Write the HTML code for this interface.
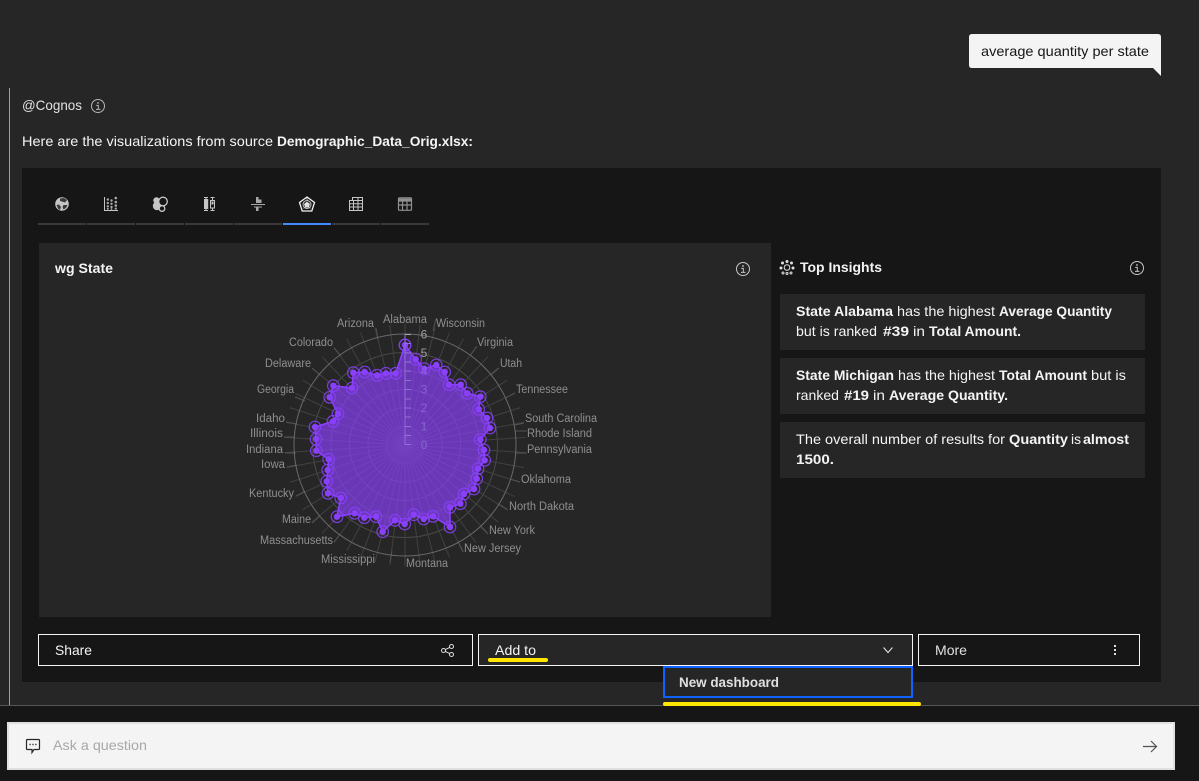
<!DOCTYPE html>
<html lang="en">
<head>
<meta charset="utf-8">
<title>Cognos Assistant</title>
<style>
html,body{margin:0;padding:0;width:1199px;height:781px;overflow:hidden;background:#262626}
body{position:relative;font-family:"Liberation Sans",sans-serif}
.b{position:absolute;box-sizing:border-box}
svg{position:absolute;left:0;top:0}
text{font-family:"Liberation Sans",sans-serif}
.t{font-size:14px;fill:#f4f4f4}
.s{font-weight:700}
.l{font-size:11.5px;fill:#8f8f8f}
.a{font-size:12px;text-anchor:middle}
</style>
</head>
<body>
<div class="b" style="left:9px;top:88px;width:1px;height:617px;background:#a58fd8"></div>
<div class="b" style="left:22px;top:168px;width:1139px;height:514px;background:#161616"></div>
<div class="b" style="left:39px;top:243px;width:732px;height:374px;background:#262626"></div>
<div class="b" style="left:780px;top:294px;width:365px;height:56px;background:#262626"></div>
<div class="b" style="left:780px;top:358px;width:365px;height:56px;background:#262626"></div>
<div class="b" style="left:780px;top:422px;width:365px;height:56px;background:#262626"></div>
<div class="b" style="left:38px;top:634px;width:435px;height:32px;border:1px solid #f4f4f4;background:#161616"></div>
<div class="b" style="left:478px;top:634px;width:435px;height:32px;border:1px solid #f4f4f4;background:#262626"></div>
<div class="b" style="left:918px;top:634px;width:222px;height:32px;border:1px solid #f4f4f4;background:#161616"></div>
<div class="b" style="left:663px;top:666px;width:250px;height:32px;border:2px solid #0f62fe;background:#262626"></div>
<div class="b" style="left:0;top:705px;width:1199px;height:76px;background:#161616;border-top:1px solid #565656"></div>
<div class="b" style="left:7px;top:722px;width:1168px;height:48px;background:#f4f4f4;border:2px solid #e0e0e0"></div>
<div class="b" style="left:488px;top:658px;width:60px;height:4px;background:#ffe600;border-radius:2px"></div>
<div class="b" style="left:663px;top:702px;width:258px;height:4px;background:#ffe600;border-radius:2px"></div>

<svg width="1199" height="781" viewBox="0 0 1199 781" xmlns="http://www.w3.org/2000/svg">
<defs>
<marker id="m" markerUnits="userSpaceOnUse" markerWidth="16" markerHeight="16" refX="8" refY="8" overflow="visible">
<circle cx="8" cy="8" r="3.2" fill="#8a3ffc"/><circle cx="8" cy="8" r="5.8" fill="none" stroke="#8a3ffc" stroke-opacity=".85" stroke-width="1.2"/>
</marker>
<g id="info" fill="none" stroke="currentColor"><circle cx="0" cy="0" r="6.5"/><path d="M-1.8 -0.6H0.3V3.4M-2 3.4H2.4" stroke-width="1"/><circle cx="0" cy="-3" r=".9" fill="currentColor" stroke="none"/></g>
</defs>

<!-- bubble -->
<path d="M972 34H1158Q1161 34 1161 37V76L1153 68H972Q969 68 969 65V37Q969 34 972 34Z" fill="#f4f4f4"/>
<text x="981" y="56" font-size="14" fill="#161616" textLength="168" lengthAdjust="spacingAndGlyphs">average quantity per state</text>

<text class="t" x="22" y="110" style="fill:#e0e0e0" textLength="60" lengthAdjust="spacingAndGlyphs">@Cognos</text>
<use href="#info" x="98" y="106" style="color:#b5b5b5"/>
<text class="t" x="22" y="146" textLength="251" lengthAdjust="spacingAndGlyphs">Here are the visualizations from source</text>
<text class="t s" x="277" y="146" textLength="196" lengthAdjust="spacingAndGlyphs">Demographic_Data_Orig.xlsx:</text>

<!-- tabs -->
<g fill="#393939">
<rect x="38" y="223" width="48" height="2"/><rect x="87" y="223" width="48" height="2"/><rect x="136" y="223" width="48" height="2"/><rect x="185" y="223" width="48" height="2"/><rect x="234" y="223" width="48" height="2"/><rect x="332" y="223" width="48" height="2"/><rect x="381" y="223" width="48" height="2"/>
</g>
<rect x="283" y="223" width="48" height="2" fill="#4589ff"/>

<!-- globe -->
<g>
<circle cx="62" cy="204" r="6.8" fill="#c6c6c6"/>
<path d="M60 198.500L64 198L67 200L65 202.500L62 201.500L60 201ZM56.500 205L59 204.500L61 207L60 210L58 208.500ZM63.500 205L67.500 205L66 208L63.500 209.500L62.500 207Z" fill="#3a3a3a"/>
</g>
<!-- scatter -->
<g fill="#a8a8a8">
<path d="M104.500 197V210.500H118" fill="none" stroke="#c6c6c6"/>
<circle cx="107.800" cy="199.500" r="1.200"/><circle cx="111.500" cy="200.500" r="1.200"/><circle cx="115.800" cy="198" r="1.300"/>
<circle cx="107.800" cy="203" r="1.200"/><circle cx="111.500" cy="203.800" r="1.200"/><circle cx="115.800" cy="202" r="1.300"/>
<circle cx="107.800" cy="206.300" r="1.200"/><circle cx="111.500" cy="207" r="1.200"/><circle cx="115.800" cy="205.500" r="1.300"/>
<circle cx="107.800" cy="208.800" r="1"/><circle cx="111.500" cy="209" r=".9"/><circle cx="115.800" cy="208.600" r="1.100"/>
</g>
<!-- bubbles -->
<g>
<circle cx="156.500" cy="200.500" r="3.200" fill="#c6c6c6"/>
<circle cx="157" cy="206" r="4.200" fill="#c6c6c6"/>
<circle cx="163" cy="201.500" r="4.300" fill="#161616" stroke="#c6c6c6" stroke-width="1.300"/>
<circle cx="162" cy="208.500" r="2.800" fill="#161616" stroke="#c6c6c6" stroke-width="1.300"/>
</g>
<!-- boxplot -->
<g stroke="#c6c6c6" fill="none">
<path d="M204 197.500H208M206 197.500V210.500M204 210.500H208M210.500 197.500H214.500M212.500 197.500V210.500M210.500 210.500H214.500"/>
<rect x="204.500" y="199.500" width="3.200" height="9" fill="#c6c6c6"/>
<rect x="210.500" y="200.500" width="4" height="7.500" fill="#161616"/>
<rect x="211.500" y="201.500" width="2" height="3" fill="#c6c6c6" stroke="none"/>
</g>
<!-- tornado -->
<g fill="#a8a8a8">
<rect x="256" y="197" width="2.500" height="6"/><rect x="258.500" y="199.500" width="3" height="3.500"/>
<rect x="251" y="204" width="14" height="1"/>
<rect x="254" y="206.500" width="8" height="1"/>
<rect x="256" y="206.500" width="2.500" height="4.500"/>
</g>
<!-- radar tab -->
<g fill="none" stroke="#f4f4f4">
<path d="M307 197L314.500 202.500L311.800 211H302.200L299.500 202.500Z" stroke-width="1.300"/>
<circle cx="307" cy="204.500" r="4" stroke="#c6c6c6" stroke-width="1"/>
<path d="M307 201.500L310 204L308.800 207.500H305.200L304 204Z" fill="#e0e0e0" stroke="none"/>
<path d="M303.500 208.500L305 207M310.500 208.500L309 207M307 198V201" stroke="#c6c6c6" stroke-width=".8"/>
</g>
<!-- table -->
<g fill="none" stroke="#c6c6c6">
<path d="M352.500 197.500H362.500V210.500H349.500V200.500H352.500ZM352.500 200.500H362.500M349.500 203.800H362.500M349.500 207H362.500M353.500 200.500V210.500M358 197.500V210.500"/>
</g>
<!-- crosstab -->
<g fill="none" stroke="#8f8f8f" stroke-width="1.200">
<rect x="398.500" y="197.800" width="13" height="12.500" rx="1"/>
<path d="M398.500 201H411.500M398.500 205H411.500M402.500 201V210M407 201V210"/>
<path d="M398.500 199.500H411.500" stroke-width="2"/>
</g>

<!-- chart header -->
<text class="t s" x="55" y="273" textLength="58" lengthAdjust="spacingAndGlyphs">wg State</text>
<use href="#info" x="743" y="269" style="color:#c6c6c6"/>

<!-- radar grid -->
<g fill="none" stroke="#414141" stroke-width="1">
<circle cx="405" cy="445" r="18.5" stroke="#4a4a4a"/><circle cx="405" cy="445" r="37" stroke="#4a4a4a"/><circle cx="405" cy="445" r="55.500" stroke="#4a4a4a"/><circle cx="405" cy="445" r="74" stroke="#4a4a4a"/><circle cx="405" cy="445" r="92.500" stroke="#4a4a4a"/>
<path id="sp" d="M405 445V324"/>
<use href="#sp" transform="rotate(7.2 405 445)"/><use href="#sp" transform="rotate(14.4 405 445)"/><use href="#sp" transform="rotate(21.6 405 445)"/><use href="#sp" transform="rotate(28.8 405 445)"/><use href="#sp" transform="rotate(36 405 445)"/><use href="#sp" transform="rotate(43.2 405 445)"/><use href="#sp" transform="rotate(50.4 405 445)"/><use href="#sp" transform="rotate(57.6 405 445)"/><use href="#sp" transform="rotate(64.8 405 445)"/><use href="#sp" transform="rotate(72 405 445)"/><use href="#sp" transform="rotate(79.2 405 445)"/><use href="#sp" transform="rotate(86.4 405 445)"/><use href="#sp" transform="rotate(93.6 405 445)"/><use href="#sp" transform="rotate(100.8 405 445)"/><use href="#sp" transform="rotate(108 405 445)"/><use href="#sp" transform="rotate(115.2 405 445)"/><use href="#sp" transform="rotate(122.4 405 445)"/><use href="#sp" transform="rotate(129.6 405 445)"/><use href="#sp" transform="rotate(136.8 405 445)"/><use href="#sp" transform="rotate(144 405 445)"/><use href="#sp" transform="rotate(151.2 405 445)"/><use href="#sp" transform="rotate(158.4 405 445)"/><use href="#sp" transform="rotate(165.6 405 445)"/><use href="#sp" transform="rotate(172.8 405 445)"/><use href="#sp" transform="rotate(180 405 445)"/><use href="#sp" transform="rotate(187.2 405 445)"/><use href="#sp" transform="rotate(194.4 405 445)"/><use href="#sp" transform="rotate(201.6 405 445)"/><use href="#sp" transform="rotate(208.8 405 445)"/><use href="#sp" transform="rotate(216 405 445)"/><use href="#sp" transform="rotate(223.2 405 445)"/><use href="#sp" transform="rotate(230.4 405 445)"/><use href="#sp" transform="rotate(237.6 405 445)"/><use href="#sp" transform="rotate(244.8 405 445)"/><use href="#sp" transform="rotate(252 405 445)"/><use href="#sp" transform="rotate(259.2 405 445)"/><use href="#sp" transform="rotate(266.4 405 445)"/><use href="#sp" transform="rotate(273.6 405 445)"/><use href="#sp" transform="rotate(280.8 405 445)"/><use href="#sp" transform="rotate(288 405 445)"/><use href="#sp" transform="rotate(295.2 405 445)"/><use href="#sp" transform="rotate(302.4 405 445)"/><use href="#sp" transform="rotate(309.6 405 445)"/><use href="#sp" transform="rotate(316.8 405 445)"/><use href="#sp" transform="rotate(324 405 445)"/><use href="#sp" transform="rotate(331.2 405 445)"/><use href="#sp" transform="rotate(338.4 405 445)"/><use href="#sp" transform="rotate(345.6 405 445)"/><use href="#sp" transform="rotate(352.8 405 445)"/>
<path stroke="#525252" d="M436 319L433 331M477 346L470 356M499 368L491 375M515 393L505 398M524 423L515 425M527 431H515M527 453H515M520 482L510 479M508 510L499 504M488 534L481 527M463 552L458 542M390 563L392 551M334 542L340 534M312 523L320 516M296 496L305 491M287 467L297 465M285 453H296M284 437H295M286 422L297 424M295 397L305 401M312 368L320 375M334 348L341 356M376 328L378 339"/>
</g>
<circle cx="405" cy="445" r="111" fill="none" stroke="#6a6a6a" stroke-width="1"/>

<!-- radar data -->
<polygon points="405,345 415.7,359.3 424.3,368.7 436.3,365 444.7,372 449,384.7 460.7,384.7 467.3,393.3 480.3,396.7 478.7,409.3 487,418 490,428 480.3,439.5 484,450 484.7,460.3 478,468.7 476.7,478.7 474,489 464,494 460.3,503.7 450,507.3 450,527 433,516.3 423.7,519 413.7,514.7 404.7,524 395,520.3 382.7,531.7 376,516.7 364.3,517.7 354.7,513.3 337,516.7 340.7,498 328,493.3 326.7,481.3 327.7,470 328.7,459.3 316.3,450.7 316,439 315,427 333,421.3 338,413.7 329.7,397.3 333.3,385.7 352,388 353.3,372.7 364.7,372 377,375.3 386,373.3 395.7,373.3" fill="#8a3ffc" fill-opacity=".68" stroke="#8a3ffc" stroke-width="1.600" stroke-linejoin="round" marker-start="url(#m)" marker-mid="url(#m)" marker-end="url(#m)"/>

<!-- axis -->
<path d="M405 334V445" stroke="#8f72d6" stroke-width="1" fill="none"/>
<path d="M405 334.500H411" stroke="#a8a8a8" fill="none"/>
<path d="M405 343.500H411M405 353H411M405 362H411M405 371H411M405 380.500H411M405 389.500H411M405 399H411M405 408H411M405 417H411M405 426.500H411M405 435.500H411M405 444.500H411" stroke="#8f72d6" fill="none"/>
<text class="a" x="424" y="338.500" fill="#a0a0a0">6</text>
<text class="a" x="424" y="357" fill="#a0a0a0">5</text>
<text class="a" x="424" y="375" fill="#8865d0">4</text>
<text class="a" x="424" y="393.500" fill="#8865d0">3</text>
<text class="a" x="424" y="412" fill="#8865d0">2</text>
<text class="a" x="424" y="430.500" fill="#8865d0">1</text>
<text class="a" x="424" y="449" fill="#8865d0">0</text>

<!-- radar labels -->
<text class="l" x="383" y="323" textLength="44" lengthAdjust="spacingAndGlyphs">Alabama</text>
<text class="l" x="436" y="327" textLength="49" lengthAdjust="spacingAndGlyphs">Wisconsin</text>
<text class="l" x="337" y="327" textLength="37" lengthAdjust="spacingAndGlyphs">Arizona</text>
<text class="l" x="477" y="346" textLength="36" lengthAdjust="spacingAndGlyphs">Virginia</text>
<text class="l" x="289" y="346" textLength="44" lengthAdjust="spacingAndGlyphs">Colorado</text>
<text class="l" x="500" y="367" textLength="22" lengthAdjust="spacingAndGlyphs">Utah</text>
<text class="l" x="265" y="367" textLength="46" lengthAdjust="spacingAndGlyphs">Delaware</text>
<text class="l" x="516" y="393" textLength="52" lengthAdjust="spacingAndGlyphs">Tennessee</text>
<text class="l" x="257" y="393" textLength="37" lengthAdjust="spacingAndGlyphs">Georgia</text>
<text class="l" x="525" y="422" textLength="72" lengthAdjust="spacingAndGlyphs">South Carolina</text>
<text class="l" x="256" y="422" textLength="29" lengthAdjust="spacingAndGlyphs">Idaho</text>
<text class="l" x="527" y="437" textLength="65" lengthAdjust="spacingAndGlyphs">Rhode Island</text>
<text class="l" x="250" y="437" textLength="33" lengthAdjust="spacingAndGlyphs">Illinois</text>
<text class="l" x="527" y="453" textLength="65" lengthAdjust="spacingAndGlyphs">Pennsylvania</text>
<text class="l" x="246" y="453" textLength="37" lengthAdjust="spacingAndGlyphs">Indiana</text>
<text class="l" x="261" y="468" textLength="24" lengthAdjust="spacingAndGlyphs">Iowa</text>
<text class="l" x="521" y="483" textLength="50" lengthAdjust="spacingAndGlyphs">Oklahoma</text>
<text class="l" x="249" y="497" textLength="45" lengthAdjust="spacingAndGlyphs">Kentucky</text>
<text class="l" x="509" y="510" textLength="65" lengthAdjust="spacingAndGlyphs">North Dakota</text>
<text class="l" x="282" y="523" textLength="29" lengthAdjust="spacingAndGlyphs">Maine</text>
<text class="l" x="489" y="534" textLength="46" lengthAdjust="spacingAndGlyphs">New York</text>
<text class="l" x="260" y="544" textLength="73" lengthAdjust="spacingAndGlyphs">Massachusetts</text>
<text class="l" x="464" y="552" textLength="57" lengthAdjust="spacingAndGlyphs">New Jersey</text>
<text class="l" x="321" y="563" textLength="54" lengthAdjust="spacingAndGlyphs">Mississippi</text>
<text class="l" x="406" y="567" textLength="42" lengthAdjust="spacingAndGlyphs">Montana</text>

<!-- insights -->
<g fill="none" stroke="#e0e0e0" stroke-width="1">
<circle cx="787" cy="267.500" r="2.800"/>
<circle cx="787" cy="261.500" r="1" fill="#e0e0e0"/><circle cx="782.500" cy="263" r="1" fill="#e0e0e0"/><circle cx="791.500" cy="263" r="1" fill="#e0e0e0"/><circle cx="781" cy="268" r="1" fill="#e0e0e0"/><circle cx="793" cy="268" r="1" fill="#e0e0e0"/><circle cx="783" cy="273" r="1"/><circle cx="787" cy="273.500" r="1"/><circle cx="791" cy="273" r="1"/>
</g>
<text class="t s" x="800" y="272" textLength="82" lengthAdjust="spacingAndGlyphs">Top Insights</text>
<use href="#info" x="1137" y="268" style="color:#c6c6c6"/>

<text class="t s" x="796" y="316" textLength="97" lengthAdjust="spacingAndGlyphs">State Alabama</text>
<text class="t" x="897" y="316" textLength="98" lengthAdjust="spacingAndGlyphs">has the highest</text>
<text class="t s" x="999" y="316" textLength="113" lengthAdjust="spacingAndGlyphs">Average Quantity</text>
<text class="t" x="796" y="336" textLength="81" lengthAdjust="spacingAndGlyphs">but is ranked</text>
<text class="t s" x="883" y="336" textLength="26" lengthAdjust="spacingAndGlyphs">#39</text>
<text class="t" x="913" y="336" textLength="12" lengthAdjust="spacingAndGlyphs">in</text>
<text class="t s" x="929" y="336" textLength="92" lengthAdjust="spacingAndGlyphs">Total Amount.</text>

<text class="t s" x="796" y="380" textLength="98" lengthAdjust="spacingAndGlyphs">State Michigan</text>
<text class="t" x="898" y="380" textLength="97" lengthAdjust="spacingAndGlyphs">has the highest</text>
<text class="t s" x="999" y="380" textLength="88" lengthAdjust="spacingAndGlyphs">Total Amount</text>
<text class="t" x="1091" y="380" textLength="35" lengthAdjust="spacingAndGlyphs">but is</text>
<text class="t" x="796" y="400" textLength="43" lengthAdjust="spacingAndGlyphs">ranked</text>
<text class="t s" x="844" y="400" textLength="25" lengthAdjust="spacingAndGlyphs">#19</text>
<text class="t" x="873" y="400" textLength="12" lengthAdjust="spacingAndGlyphs">in</text>
<text class="t s" x="889" y="400" textLength="119" lengthAdjust="spacingAndGlyphs">Average Quantity.</text>

<text class="t" x="796" y="444" textLength="209" lengthAdjust="spacingAndGlyphs">The overall number of results for</text>
<text class="t s" x="1009" y="444" textLength="59" lengthAdjust="spacingAndGlyphs">Quantity</text>
<text class="t" x="1071" y="444" textLength="10" lengthAdjust="spacingAndGlyphs">is</text>
<text class="t s" x="1083" y="444" textLength="46" lengthAdjust="spacingAndGlyphs">almost</text>
<text class="t s" x="796" y="464" textLength="38" lengthAdjust="spacingAndGlyphs">1500.</text>

<!-- buttons -->
<text class="t" x="55" y="655" textLength="37" lengthAdjust="spacingAndGlyphs">Share</text>
<g fill="none" stroke="#e0e0e0" stroke-width="1">
<circle cx="451.500" cy="646.500" r="2"/><circle cx="451.500" cy="654.500" r="2"/><circle cx="443.500" cy="650.500" r="2"/>
<path d="M445.300 649.600L449.700 647.400M445.300 651.400L449.700 653.600"/>
</g>
<text class="t" x="495" y="655" textLength="41" lengthAdjust="spacingAndGlyphs">Add to</text>
<path d="M883.500 647.500L888 652.500L892.500 647.500" fill="none" stroke="#e0e0e0" stroke-width="1.100"/>
<text class="t" x="935" y="655" textLength="32" lengthAdjust="spacingAndGlyphs" style="fill:#e0e0e0">More</text>
<g fill="#e0e0e0"><rect x="1114" y="645" width="2" height="2"/><rect x="1114" y="649" width="2" height="2"/><rect x="1114" y="653" width="2" height="2"/></g>
<text class="t" x="679" y="687" textLength="100" lengthAdjust="spacingAndGlyphs" style="fill:#e0e0e0;font-weight:700">New dashboard</text>

<!-- input -->
<path d="M27.500 739.500H38.500Q39.500 739.500 39.500 740.500V748.500Q39.500 749.500 38.500 749.500H34L32 752.500V749.500H27.500Q26.500 749.500 26.500 748.500V740.500Q26.500 739.500 27.500 739.500Z" fill="none" stroke="#262626" stroke-width="1.200"/>
<path d="M29.500 744.500H30.700M32.400 744.500H33.600M35.300 744.500H36.500" stroke="#262626" stroke-width="1.400" fill="none"/>
<text x="53" y="750" font-size="14" fill="#a8a8a8" textLength="94" lengthAdjust="spacingAndGlyphs">Ask a question</text>
<path d="M1143 746.500H1156.500M1151 741L1156.500 746.500L1151 752" fill="none" stroke="#525252" stroke-width="1.200"/>
</svg>
</body>
</html>
